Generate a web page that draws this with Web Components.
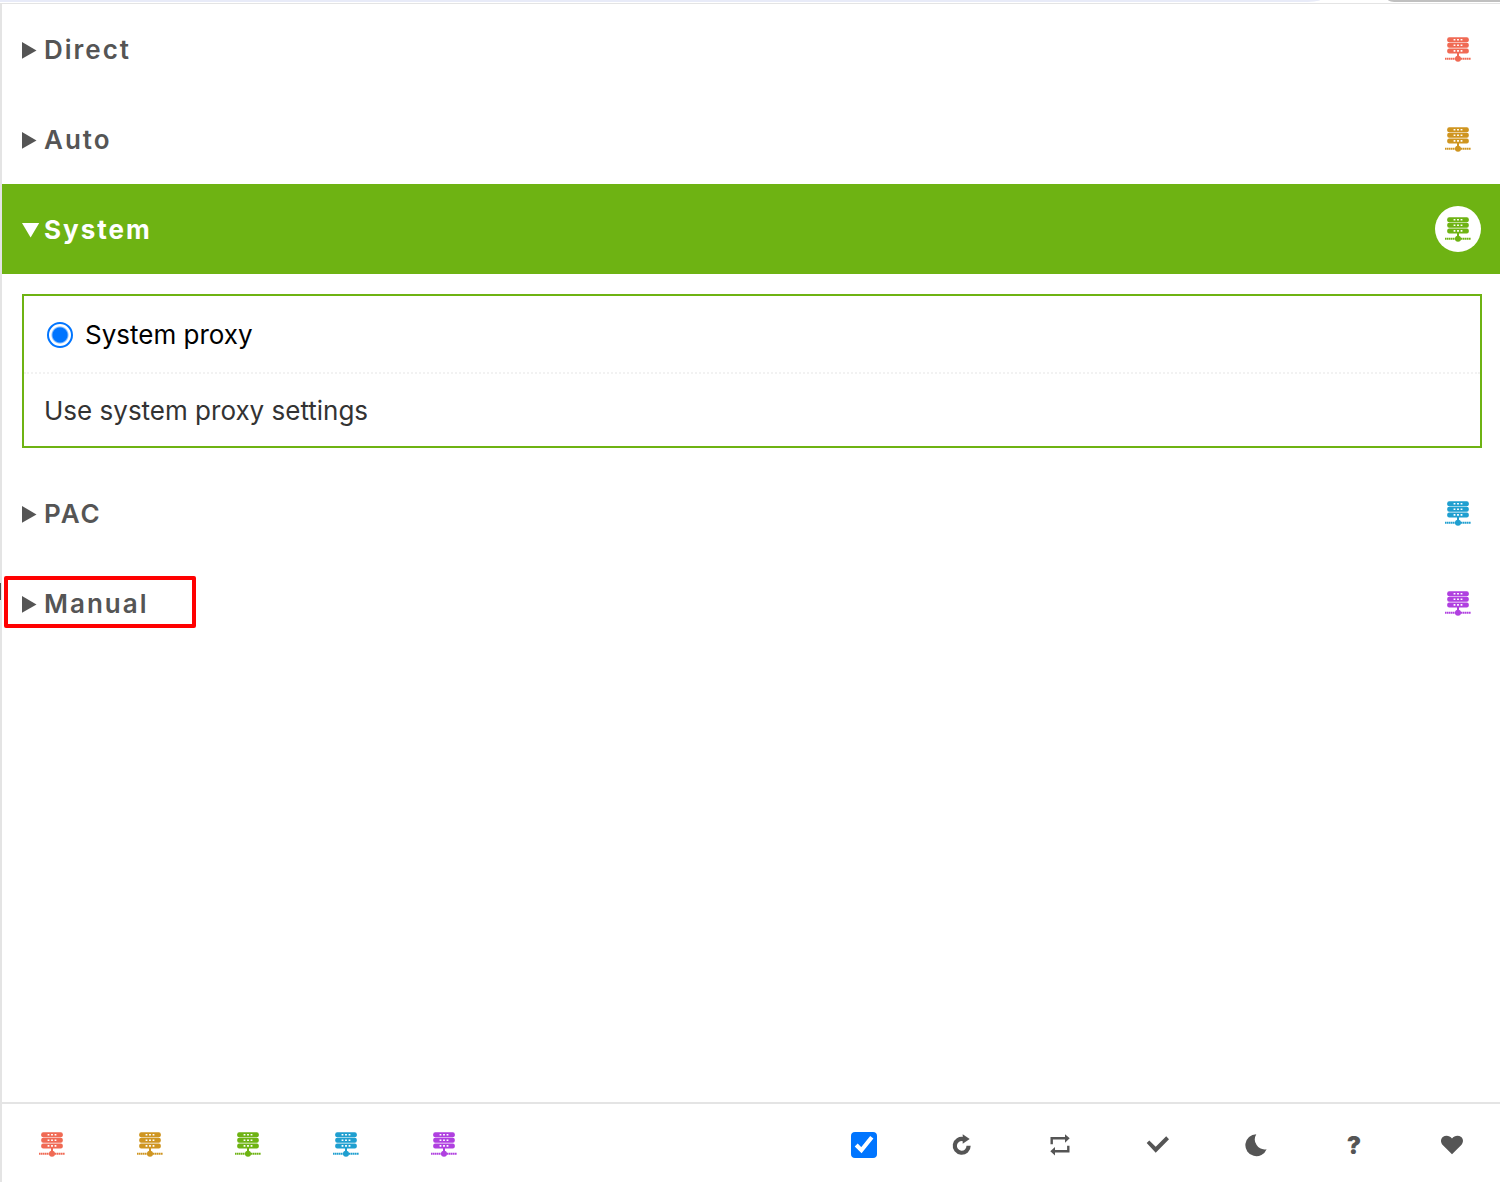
<!DOCTYPE html>
<html lang="en">
<head>
<meta charset="utf-8">
<meta name="viewport" content="width=device-width, initial-scale=1">
<title>Proxy</title>
<style>
  body {
    margin: 0;
    background: #fff;
    color: #000;
    font: 26px/32px Inter, "Liberation Sans", sans-serif;
    --direct: #f06a54;
    --auto: #cf9520;
    --system: #6eb313;
    --pac: #1f9fd0;
    --manual: #b040e0;
    --icon: #555;
    --line: #e4e4e4;
  }
</style>
</head>
<body>
<proxy-popup>
  <proxy-mode label="Direct" color="var(--direct)"></proxy-mode>
  <proxy-mode label="Auto" color="var(--auto)"></proxy-mode>
  <proxy-mode label="System" color="var(--system)" open>
    <profile-card label="System proxy">Use system proxy settings</profile-card>
  </proxy-mode>
  <proxy-mode label="PAC" color="var(--pac)"></proxy-mode>
  <proxy-mode label="Manual" color="var(--manual)" marked></proxy-mode>
  <tool-bar slot="footer"></tool-bar>
</proxy-popup>

<script>
class ServerIcon extends HTMLElement {
  constructor() {
    super();
    this.attachShadow({ mode: 'open' });
    this.shadowRoot.innerHTML = `
      <style>
        :host { display: block; width: 26px; height: 26px; }
        svg { display: block; }
      </style>
      <svg width="26" height="26" viewBox="0 0 26 26" fill="currentColor" aria-hidden="true">
        <rect x="2.2" y="1.200" width="21.6" height="5" rx="2"/>
        <rect x="2.2" y="6.800" width="21.6" height="5" rx="2"/>
        <rect x="2.2" y="12.400" width="21.6" height="5" rx="2"/>
        <rect x="12" y="17" width="2" height="3"/>
        <path d="M0 22.700h26" stroke="currentColor" stroke-width="2" stroke-dasharray="1.6 .4"/>
        <circle cx="13" cy="22.700" r="3"/>
        <g fill="#fff">
          <path d="M8.600 2.900h1.800v1.600H8.600zM12.100 2.900h1.800v1.600h-1.800zM15.600 2.900h1.800v1.600h-1.800z"/>
          <path d="M8.600 8.500h1.800v1.600H8.600zM12.100 8.500h1.800v1.600h-1.800zM15.600 8.500h1.800v1.600h-1.800z"/>
          <path d="M8.600 14.100h1.800v1.600H8.600zM12.100 14.100h1.800v1.600h-1.800zM15.600 14.100h1.800v1.600h-1.800z"/>
        </g>
      </svg>
    `;
  }
}

class ProxyMode extends HTMLElement {
  constructor() {
    super();
    this.attachShadow({ mode: 'open' });
    this.shadowRoot.innerHTML = `
      <style>
        :host { display: block; position: relative; }
        summary {
          display: flex;
          align-items: center;
          gap: 2px;
          height: 90px;
          padding: 0 19px 0 20px;
          color: #555;
          cursor: pointer;
          list-style: none;
        }
        summary::-webkit-details-marker { display: none; }
        .marker { width: 20px; height: 20px; }
        .marker .opened { display: none; }
        h2 {
          flex: 1;
          margin: 0;
          padding-top: 2px;
          font-size: 26px;
          font-weight: 600;
          letter-spacing: 2px;
        }
        .badge {
          display: grid;
          place-items: center;
          width: 46px;
          height: 46px;
          border-radius: 50%;
          color: var(--mode);
        }
        details[open] summary { background: var(--mode); color: #fff; }
        details[open] .badge { background: #fff; }
        details[open] .closed { display: none; }
        details[open] .opened { display: inline; }
        details[open] h2 { font-weight: 700; }
        .content { padding: 20px 18px 20px 20px; }
        .mark {
          display: none;
          position: absolute;
          top: 18px;
          left: 2px;
          box-sizing: border-box;
          width: 192px;
          height: 52px;
          border: 4px solid #f00;
          border-radius: 2px;
          pointer-events: none;
        }
        :host([marked]) .mark { display: block; }
      </style>
      <details>
        <summary>
          <svg class="marker" viewBox="0 0 20 20" fill="currentColor" aria-hidden="true">
            <path class="closed" d="M0 3v16.800l14.500-8.400z"/>
            <path class="opened" d="M0 4h17.200L8.600 18.500z"/>
          </svg>
          <h2></h2>
          <span class="badge"><server-icon></server-icon></span>
        </summary>
        <div class="content"><slot></slot></div>
      </details>
      <div class="mark"></div>
    `;
  }

  connectedCallback() {
    this.style.setProperty('--mode', this.getAttribute('color'));
    this.shadowRoot.querySelector('h2').textContent = this.getAttribute('label');
    this.shadowRoot.querySelector('details').open = this.hasAttribute('open');
  }
}

class ProfileCard extends HTMLElement {
  constructor() {
    super();
    this.attachShadow({ mode: 'open' });
    this.shadowRoot.innerHTML = `
      <style>
        :host { display: block; border: 2px solid var(--mode); }
        label {
          display: flex;
          align-items: center;
          gap: 12px;
          padding: 23px 23px 21px;
          border-bottom: 2px dotted #f2f2f2;
        }
        input {
          appearance: none;
          box-sizing: border-box;
          width: 26px;
          height: 26px;
          margin: 0;
          border: 2px solid #767676;
          border-radius: 50%;
        }
        input:checked {
          border-color: #0075ff;
          background: radial-gradient(circle, #0075ff 7px, #fff 9px);
        }
        p { margin: 0; padding: 21px 20px 19px; color: #333; }
      </style>
      <label><input type="radio" name="profile" checked><span></span></label>
      <p><slot></slot></p>
    `;
  }

  connectedCallback() {
    this.shadowRoot.querySelector('span').textContent = this.getAttribute('label');
  }
}

class ToolBar extends HTMLElement {
  constructor() {
    super();
    this.attachShadow({ mode: 'open' });
    this.shadowRoot.innerHTML = `
      <style>
        :host {
          display: flex;
          justify-content: space-between;
          padding: 15px 23px 13px 25px;
          border-top: 2px solid var(--line);
          color: var(--icon);
        }
        div { display: flex; gap: 48px; }
        button, label {
          display: grid;
          place-items: center;
          box-sizing: border-box;
          width: 50px;
          height: 50px;
          padding: 0;
          border: 0;
          background: none;
          color: inherit;
          font: inherit;
          cursor: pointer;
        }
        label { padding-top: 2px; }
        input {
          width: 26px;
          height: 26px;
          margin: 0;
          clip-path: inset(0 round 4px);
        }
        svg { display: block; width: 26px; height: 26px; }
        .help { padding-top: 4px; font-size: 24px; font-weight: 900; }
      </style>
      <div class="modes">
        <button aria-label="Direct" style="color: var(--direct)"><server-icon></server-icon></button>
        <button aria-label="Auto" style="color: var(--auto)"><server-icon></server-icon></button>
        <button aria-label="System" style="color: var(--system)"><server-icon></server-icon></button>
        <button aria-label="PAC" style="color: var(--pac)"><server-icon></server-icon></button>
        <button aria-label="Manual" style="color: var(--manual)"><server-icon></server-icon></button>
      </div>
      <div class="tools">
        <label aria-label="Enabled"><input type="checkbox" aria-label="Enabled" checked></label>
        <button aria-label="Reload">
          <svg viewBox="0 0 26 26" fill="currentColor">
            <path d="M19.600 14.800A6.900 6.900 0 1 1 14.500 8.200" fill="none" stroke="currentColor" stroke-width="4.200"/>
            <path d="M13.700 3.200l7 4.700-7 4.800z"/>
          </svg>
        </button>
        <button aria-label="Repeat">
          <svg viewBox="0 0 26 26" fill="currentColor">
            <path d="M4.700 13.300v-6h14M21.300 14.700v5.600h-14" fill="none" stroke="currentColor" stroke-width="2.400"/>
            <path d="M18 3.300l4.700 4-4.700 4.400zM8 16l-4.700 4.300L8 24.600z"/>
          </svg>
        </button>
        <button aria-label="Test">
          <svg viewBox="0 0 26 26" fill="currentColor">
            <path d="M1.700 12L4.300 9.400l6.400 6.300L21.200 5.300l2.800 2.900-13.300 13.600z"/>
          </svg>
        </button>
        <button aria-label="Dark mode">
          <svg viewBox="0 0 26 26" fill="currentColor">
            <path d="M13.300 3.200A11 11 0 1 0 23.600 18.200 10 10 0 0 1 13.300 3.200z"/>
          </svg>
        </button>
        <button class="help" aria-label="Help">?</button>
        <button aria-label="Donate">
          <svg viewBox="0 0 26 26" fill="currentColor">
            <path d="M13 23.200L3.700 14C1.300 11.400 1.500 8 3.800 6.100 6.500 4 10.500 4.300 13 7.600 15.500 4.300 19.500 4 22.200 6.100 24.500 8 24.700 11.400 22.300 14z"/>
          </svg>
        </button>
      </div>
    `;
  }
}

class ProxyPopup extends HTMLElement {
  constructor() {
    super();
    this.attachShadow({ mode: 'open' });
    this.shadowRoot.innerHTML = `
      <style>
        :host {
          display: flex;
          flex-direction: column;
          position: relative;
          min-height: 100vh;
        }
        /* the page behind the popup shows through at its left edge */
        :host::after {
          content: "";
          position: absolute;
          top: 583px;
          left: 0;
          width: 1px;
          height: 17px;
          background: #555;
        }
        /* sliver of the browser window above the popup */
        .browser {
          display: flex;
          justify-content: space-between;
          height: 3px;
        }
        .browser::before {
          content: "";
          width: 88%;
          height: 2px;
          border-bottom-right-radius: 20px 2px;
          background: #e8ebf8;
        }
        .browser::after {
          content: "";
          width: 112px;
          height: 2px;
          border-bottom-left-radius: 10px 2px;
          background: #c0c0c0;
        }
        .popup {
          display: flex;
          flex: 1;
          flex-direction: column;
          border-top: 1px solid var(--line);
          border-left: 2px solid var(--line);
        }
        main { flex: 1; }
      </style>
      <div class="browser"></div>
      <div class="popup">
        <main><slot></slot></main>
        <slot name="footer"></slot>
      </div>
    `;
  }
}

customElements.define('server-icon', ServerIcon);
customElements.define('proxy-mode', ProxyMode);
customElements.define('profile-card', ProfileCard);
customElements.define('tool-bar', ToolBar);
customElements.define('proxy-popup', ProxyPopup);
</script>
</body>
</html>
